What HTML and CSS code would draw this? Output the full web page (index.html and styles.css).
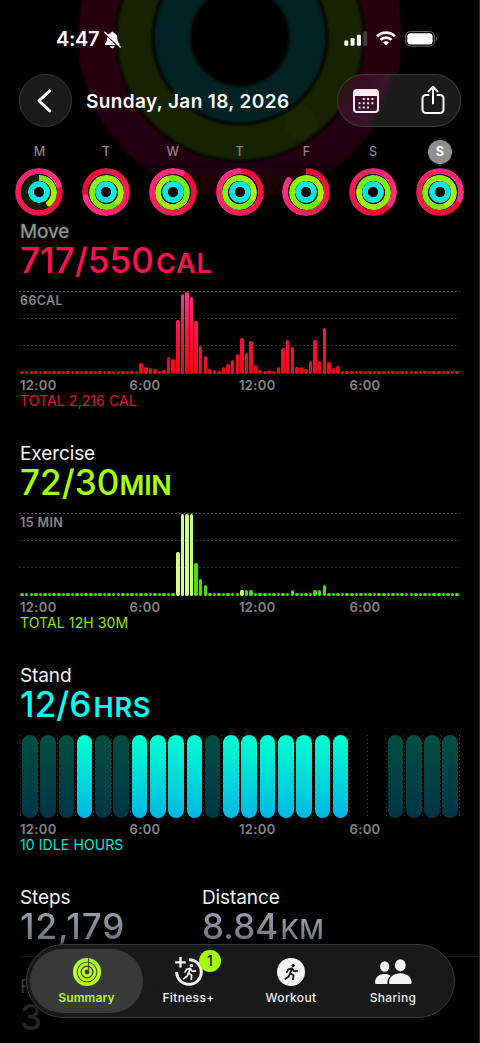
FILE: index.html
```html
<!DOCTYPE html>
<html lang="en">
<head>
<meta charset="utf-8">
<title>Activity</title>
<link rel="stylesheet" href="styles.css">
</head>
<body>
<div class="screen">
  <svg class="backdrop" viewBox="0 0 480 210" aria-hidden="true">
    <defs>
      <filter id="soft"><feGaussianBlur stdDeviation="1.6"/></filter>
      <linearGradient id="bgRed" x1="0" y1="0" x2="0" y2="1"><stop offset="0" stop-color="#2a0515"/><stop offset=".55" stop-color="#27040f"/><stop offset="1" stop-color="#1e0006"/></linearGradient>
    </defs>
    <g fill="none" filter="url(#soft)">
      <circle cx="240" cy="37" r="143.5" stroke="url(#bgRed)" stroke-width="37"/>
      <circle cx="240" cy="37" r="105.5" stroke="#192200" stroke-width="34"/>
      <circle cx="240" cy="37" r="67.5" stroke="#002421" stroke-width="36"/>
      <circle cx="301" cy="123" r="16.500" fill="#1f2500"/>
    </g>
  </svg>

  <div class="status">
    <span class="clock">4:47</span>
    <svg class="bell" viewBox="0 0 17 18"><path d="M8.300.700c1.100 0 1.500.700 1.600 1.400 2.400.700 3.500 2.600 3.500 4.900 0 3.500.800 4.300 2 5.600.500.600.200 1.500-.700 1.500H1.800c-.900 0-1.200-.900-.700-1.500 1.200-1.300 2-2.100 2-5.600 0-2.300 1.200-4.200 3.600-4.900.100-.700.500-1.400 1.600-1.400zM5.900 15.300h4.800c-.200 1.100-1.100 1.900-2.400 1.900s-2.200-.800-2.400-1.900z" fill="#fff"/><path d="M.500 2.600l14.500 13.500" stroke="#1a040c" stroke-width="1.300"/><path d="M.8 1.300L16.200 16" stroke="#fff" stroke-width="1.300" stroke-linecap="round"/></svg>
    <svg class="signal" viewBox="0 0 24 16" fill="#fff"><rect x=".3" y="9.500" width="4" height="5.300" rx="1.200"/><rect x="6.600" y="7" width="4" height="7.800" rx="1.200"/><rect x="12.900" y="3.700" width="4" height="11.100" rx="1.200"/><rect x="19.200" y=".6" width="4" height="14.200" rx="1.200" opacity=".23"/></svg>
    <svg class="wifi" viewBox="0 0 20 15" fill="none" stroke="#fff" stroke-width="2.700"><path d="M1.200 5.200a12.600 12.600 0 0 1 17.600 0"/><path d="M4.500 8.900a7.900 7.900 0 0 1 11 0"/><path d="M10 14.600l-2.900-3a4.200 4.200 0 0 1 5.800 0z" fill="#fff" stroke="none"/></svg>
    <svg class="battery" viewBox="0 0 33 16"><rect x=".5" y=".5" width="29" height="14.700" rx="5" fill="none" stroke="#666"/><rect x="2.300" y="2.200" width="25.300" height="11.300" rx="3.400" fill="#fff"/><path d="M31.200 5.800c1.600.7 1.600 3.500 0 4.200z" fill="#777"/></svg>
  </div>

  <header class="header">
    <div class="back"><svg viewBox="0 0 54 54"><path d="M31.300 17.200L20.300 27.400l11 10.200" fill="none" stroke="#fff" stroke-width="2.900" stroke-linecap="round" stroke-linejoin="round"/></svg></div>
    <h1 class="date">Sunday, Jan 18, 2026</h1>
    <div class="actions">
      <svg class="calendar" viewBox="0 0 26 24"><rect x="1" y="1" width="24" height="22" rx="3" fill="none" stroke="#ffe9f2" stroke-width="2"/><path d="M1 3.500Q1 1 4 1h18q3 0 3 2.500V7H1z" fill="#ffe9f2"/><g stroke="#ffe9f2" stroke-width="2" stroke-dasharray="2 2.300"><path d="M9.800 10.100h11.600M5.500 14.300h15.900M5.500 18.500h11"/></g></svg>
      <svg class="share" viewBox="0 0 24 30" fill="none" stroke="#fff" stroke-width="2" stroke-linecap="round" stroke-linejoin="round"><path d="M7.500 10H5.200Q1.500 10 1.500 13.700v10.600Q1.500 28 5.200 28h13.600q3.700 0 3.700-3.700V13.700Q22.500 10 18.800 10h-2.300M12 18.500V2M7.500 6.200L12 1.700l4.500 4.500"/></svg>
    </div>
  </header>

  <div class="week" id="week"></div>

  <main class="content">
    <section class="metric move">
      <h2 class="name">Move</h2>
      <div class="value"><span>717/550</span><small>CAL</small></div>
      <div class="chart grid"><span class="peak">66CAL</span><div class="bars" id="moveBars"></div></div>
      <div class="axis"><span>12:00</span><span>6:00</span><span>12:00</span><span>6:00</span></div>
      <div class="total">TOTAL 2,216 CAL</div>
    </section>
    <section class="metric exercise">
      <h2 class="name">Exercise</h2>
      <div class="value"><span>72/30</span><small>MIN</small></div>
      <div class="chart grid"><span class="peak">15 MIN</span><div class="bars" id="exerciseBars"></div></div>
      <div class="axis"><span>12:00</span><span>6:00</span><span>12:00</span><span>6:00</span></div>
      <div class="total">TOTAL 12H 30M</div>
    </section>
    <section class="metric stand">
      <h2 class="name">Stand</h2>
      <div class="value"><span>12/6</span><small>HRS</small></div>
      <div class="chart"><div class="hours" id="hours"></div></div>
      <div class="axis"><span>12:00</span><span>6:00</span><span>12:00</span><span>6:00</span></div>
      <div class="total">10 IDLE HOURS</div>
    </section>
    <section class="pair">
      <div class="stat steps"><h2 class="name">Steps</h2><div class="value"><span>12,179</span></div></div>
      <div class="stat"><h2 class="name">Distance</h2><div class="value"><span>8.84</span><small>KM</small></div></div>
    </section>
    <section class="flights"><h2 class="name">Flights Climbed</h2><div class="value"><span>3</span></div></section>
  </main>

  <nav class="tabs">
    <div class="tab active">
      <svg viewBox="0 0 30 30" fill="none" stroke="#b4fa1e"><circle cx="15" cy="15" r="12.200" stroke-width="3.800"/><circle cx="15" cy="15" r="7.900" stroke-width="3"/><circle cx="15" cy="15" r="3.800" stroke-width="2.800"/><path d="M16.700 1v12" stroke="#3b3b3b" stroke-width="1"/></svg>
      <span>Summary</span>
    </div>
    <div class="tab">
      <svg viewBox="0 0 30 30"><g fill="none" stroke="#f4f4f4"><path d="M15 2.700A12.300 12.300 0 1 1 2.700 15" stroke-width="3"/><path d="M6.500 0v10.600M1.200 5.300h10.600" stroke-width="2.300"/></g><g transform="translate(15.200 15.200)"><circle cx="2.200" cy="-6.600" r="1.700" fill="#f4f4f4"/><path d="M1-3.800L-.8.900M1-3.800l-3.700.9-1.500 2.800M1.300-3.600L3-.8l3.200-.6M-.7.8l3.200 2.400L2 7M-.7 1l-1.600 3.200-3.300 2.400" fill="none" stroke="#f4f4f4" stroke-width="1.700" stroke-linecap="round" stroke-linejoin="round"/></g></svg>
      <span>Fitness+</span><b class="badge">1</b>
    </div>
    <div class="tab">
      <svg viewBox="0 0 30 30"><circle cx="15" cy="15" r="14" fill="#f4f4f4"/><g transform="translate(15 15.200)"><circle cx="2.200" cy="-6.600" r="1.700" fill="#161616"/><path d="M1-3.800L-.8.900M1-3.800l-3.700.9-1.500 2.800M1.300-3.600L3-.8l3.200-.6M-.7.8l3.200 2.400L2 7M-.7 1l-1.600 3.200-3.300 2.400" fill="none" stroke="#161616" stroke-width="1.800" stroke-linecap="round" stroke-linejoin="round"/></g></svg>
      <span>Workout</span>
    </div>
    <div class="tab">
      <svg class="people" viewBox="0 0 38 30" fill="#f4f4f4"><ellipse cx="10.700" cy="9.500" rx="4.600" ry="5.200"/><path d="M1 25.700C1 20.300 5.500 17 10.700 17c2.300 0 4.300.6 6 1.700-2.500 1.900-3.600 4.600-3.300 8.300H2.400Q1 27 1 25.700z"/><ellipse cx="26.300" cy="8.300" rx="5.400" ry="6.100"/><path d="M15 25.500c0-5.700 5.200-9.300 11.300-9.300s11.300 3.600 11.300 9.300q0 1.500-1.500 1.500H16.500Q15 27 15 25.500z"/></svg>
      <span>Sharing</span>
    </div>
  </nav>
</div>
<script src="charts.js"></script>
</body>
</html>
```
FILE: styles.css
```css
* { box-sizing: border-box; }
body { margin: 0; background: #000; color: #fff; font-family: Inter, "Liberation Sans", sans-serif; }
h1, h2 { margin: 0; font-weight: 400; }
svg { display: block; flex: none; }
.screen { position: relative; width: 480px; height: 1043px; overflow: hidden; background: #000; border-right: 1px solid #2a2a2a; }
.backdrop { position: absolute; left: 0; top: 0; width: 480px; height: 210px; }
.status { position: relative; height: 73px; padding: 31px 0 0 56px; display: flex; align-items: flex-start; }
.clock { width: 48px; font-size: 20px; line-height: 17px; font-weight: 600; letter-spacing: -.3px; }
.bell { width: 17px; height: 18px; margin-right: 223px; }
.signal { width: 24px; height: 16px; margin-right: 8px; }
.wifi { width: 20px; height: 15px; margin-right: 9px; }
.battery { width: 33px; height: 16px; }

.header { position: relative; height: 55px; padding-left: 19px; display: flex; align-items: center; }
.back { width: 53px; height: 53px; border-radius: 50%; background: #1a1a1a; border: 1px solid #343434; }
.back svg { width: 53px; height: 53px; margin: -1px; }
.date { width: 250px; padding-left: 14px; padding-top: 1px; font-size: 19px; font-weight: 600; letter-spacing: .38px; white-space: nowrap; }
.actions { width: 124px; height: 53px; margin-left: 15px; border: 1px solid #3d3d3d; border-left-color: #552638; border-radius: 27px; padding-left: 15px; display: flex; align-items: center; background: radial-gradient(circle at -98px -37px, #221d04 110px, #351020 124px, #3a1428 153px, #1a1a1a 160px); }
.calendar { width: 26px; height: 24px; margin-right: 42px; }
.share { width: 24px; height: 30px; margin-top: -2px; }

.week { position: relative; height: 93px; padding: 12px 5.500px 0 6px; display: grid; grid-template-columns: repeat(7, 66.75px); }
.day { display: flex; flex-direction: column; align-items: center; }
.letter { width: 24px; height: 24px; line-height: 24px; text-align: center; font-size: 12.500px; font-weight: 500; color: #8b8488; border-radius: 50%; margin-bottom: 4px; }
.letter.today { color: #fff; background: #8f8f8f; font-weight: 700; }
.rings { display: grid; width: 48px; height: 48px; place-items: center; }
.ring { grid-area: 1 / 1; border-radius: 50%; position: relative; -webkit-mask: radial-gradient(closest-side, transparent calc(100% - 6.200px), #000 calc(100% - 5.700px)); mask: radial-gradient(closest-side, transparent calc(100% - 6.200px), #000 calc(100% - 5.700px)); }
.ring i { position: absolute; inset: 0; }
.ring i::before { content: ""; position: absolute; left: calc(50% - 2.900px); top: 0; width: 5.800px; height: 5.800px; border-radius: 50%; background: var(--tip); }
.outer { width: 48px; height: 48px; }
.middle { width: 35px; height: 35px; }
.inner { width: 22px; height: 22px; }

.content { position: relative; padding: 0 20px; }
.metric, .pair { height: 222px; }
.name { height: 22px; font-size: 19px; line-height: 22px; letter-spacing: -.1px; color: #f4f4f4; font-weight: 400; }
.move .name { color: #969696; text-shadow: 0 0 2px #555; }
.value { height: 48px; line-height: 34px; font-size: 35px; font-weight: 500; letter-spacing: .1px; white-space: nowrap; color: var(--tint); }
.value small { font-size: 27px; margin-left: 2px; font-weight: 600; letter-spacing: .8px; }
.exercise .value small { letter-spacing: -.3px; margin-left: 0; }
.pair .value small { font-weight: 500; letter-spacing: .3px; }
.steps .value { letter-spacing: .9px; }
.move { --tint: #ff0f50; }
.exercise { --tint: #a5ff00; }
.stand { --tint: #00fff5; }
.chart { position: relative; height: 83px; width: 440px; }
.grid::before { content: ""; position: absolute; left: -1px; right: 0; top: 0; height: 82px; background: repeating-linear-gradient(90deg, transparent 0 2px, #000 2px 4px), linear-gradient(#4a4a4a 1px, transparent 1px 27px, #303030 27px 28px, transparent 28px 54px, #303030 54px 55px, transparent 55px); }
.peak { position: absolute; top: 2px; left: 0; font-size: 12.500px; line-height: 15px; font-weight: 600; letter-spacing: .4px; color: #85858a; }
.bars { position: relative; height: 83px; display: grid; grid-template-columns: repeat(96, 4.589px); align-items: end; }
.bar { width: 3.500px; margin-left: .4px; border-radius: 1.700px; }
.move .bar { background: linear-gradient(0deg, #ef0715, #fb1442 42px, #ff3191 83px) 0 100% / 100% 83px; }
.exercise .bar { background: #42e500; }
.exercise .bar.bright { background: #cfff83; }
.hours { height: 83px; width: 441px; display: grid; grid-template-columns: repeat(24, 18.290px); position: relative; }
.hour { position: relative; padding-left: 2px; }
.hour::before, .hours::after { content: ""; position: absolute; left: 0; top: 0; width: 1px; height: 82px; background: repeating-linear-gradient(#3a3a3a 0 1px, transparent 1px 4px); }
.hours::after { left: 439px; background: repeating-linear-gradient(#5a5a5a 0 1px, transparent 1px 4px); }
.pill { height: 83px; width: 15.600px; border-radius: 8px; background: linear-gradient(#024e40, #003646); }
.pill.on { background: linear-gradient(#00ffd0, #00b8e4); }
.pill.none { visibility: hidden; }
.axis { height: 19px; padding-top: 3px; display: flex; font-size: 13px; line-height: 16px; font-weight: 600; letter-spacing: .35px; color: #828286; }
.axis span { width: 110px; }
.axis span:nth-child(3) { width: 111px; }
.total { margin-top: -1px; font-size: 14px; line-height: 17px; letter-spacing: .1px; color: color-mix(in srgb, var(--tint) 90%, #000); }
.pair { height: 88px; display: grid; grid-template-columns: 182px 1fr; }
.pair .value span, .pair .value small { background: linear-gradient(#a5aaba, #70747c 85%); -webkit-background-clip: text; background-clip: text; color: transparent; }
.flights { position: relative; --tint: #232527; padding-top: 1px; margin-right: -20px; }
.flights::before { content: ""; position: absolute; left: 0; right: 0; top: -19px; height: 1px; background: #171717; }
.flights .name { color: #3b3b3b; }
.flights .value { padding-top: 2px; }

.tabs { position: absolute; left: 26px; top: 944px; width: 429px; height: 74px; border: 1px solid #393939; border-radius: 37px; background: rgba(25, 25, 25, .96); display: grid; grid-template-columns: 113px 91px 114px 90px; padding: 4px 3px; box-shadow: 0 0 3px #000; }
.tab { position: relative; height: 64px; display: flex; flex-direction: column; align-items: center; padding-top: 8px; font-size: 12px; line-height: 15px; font-weight: 500; letter-spacing: .35px; color: #f0f0f0; }
.tab svg { width: 30px; height: 30px; margin-bottom: 3px; }
.tab .people { width: 38px; }
.active { border-radius: 32px; background: rgba(60, 60, 60, .95); color: #b4fa1e; font-weight: 600; letter-spacing: .1px; }
.badge { position: absolute; top: 1px; left: 56px; width: 22px; height: 22px; border-radius: 50%; background: #a5ff00; color: #101800; font-size: 14px; line-height: 22px; font-weight: 500; text-align: center; letter-spacing: 0; }
```
FILE: charts.js
```js
// Activity bars: one entry per quarter hour, in pixels; missing entries are idle dots.
const moveData = { 26: [11.3, 7, 6.3, 5.3, 3.3, 4.3, 17, 14.7, 54, 79.7, 82.5, 76.7, 52.7, 28.3, 17.7, 5.3, 4.3, 3.3, 7, 10.3, 14.3, 20, 35.7, 21, 32.7, 8.7, 3.7, 3.3, 4, 3.5, 7, 25.7, 34.3, 26.7, 7, 7, 5.3, 13.3, 34, 13.3, 45.7, 12.3, 6.3, 7.7] };
const exerciseData = { 34: [44, 82.5, 82.5, 82.5, 33, 16.7, 11], 48: [6, 6, 6], 59: [6], 64: [6, 6, 11] };
const bright = [34, 35, 36, 37, 48];

function drawBars(id, data) {
  const heights = Array(96).fill(3.5);
  for (const start in data) data[start].forEach((h, i) => { heights[+start + i] = h; });
  document.getElementById(id).innerHTML = heights
    .map((h, i) => `<div class="bar${bright.includes(i) ? ' bright' : ''}" style="height:${h}px"></div>`).join('');
}
drawBars('moveBars', moveData);
drawBars('exerciseBars', exerciseData);

// Stand hours: 1 stood, 0 idle, - no data.
document.getElementById('hours').innerHTML = [...'000100111101111111--0000']
  .map(c => `<div class="hour"><div class="pill ${c === '1' ? 'on' : c === '-' ? 'none' : ''}"></div></div>`).join('');

// Each ring is [end angle, partial]; a full lap is drawn below unless partial.
const week = [
  ['M', [70], [140, true], [140]],
  ['T', [255], [130], [140]],
  ['W', [25], [335], [20]],
  ['T', [355], [110], [95]],
  ['F', [304, true], [115], [60]],
  ['S', [125], [275], [180]],
  ['S', [110], [150], [30]]
];
const colors = {
  outer: ['#e90b2a', '#ff2f87', '#220006'],
  middle: ['#6cea00', '#adf600', '#0b2300'],
  inner: ['#00dfd8', '#05f0dc', '#002320']
};
function ring(kind, [end, partial]) {
  const [from, to, track] = colors[kind];
  const fill = partial
    ? `conic-gradient(${from}, ${to} ${end}deg, ${track} ${end}deg)`
    : `conic-gradient(from ${end}deg, ${from}, ${to})`;
  return `<div class="ring ${kind}" style="background:${fill};--tip:${to}"><i style="transform:rotate(${end}deg)"></i></div>`;
}
document.getElementById('week').innerHTML = week.map(([letter, a, b, c], i) =>
  `<div class="day"><div class="letter${i === 6 ? ' today' : ''}">${letter}</div><div class="rings">${ring('outer', a)}${ring('middle', b)}${ring('inner', c)}</div></div>`).join('');
```
